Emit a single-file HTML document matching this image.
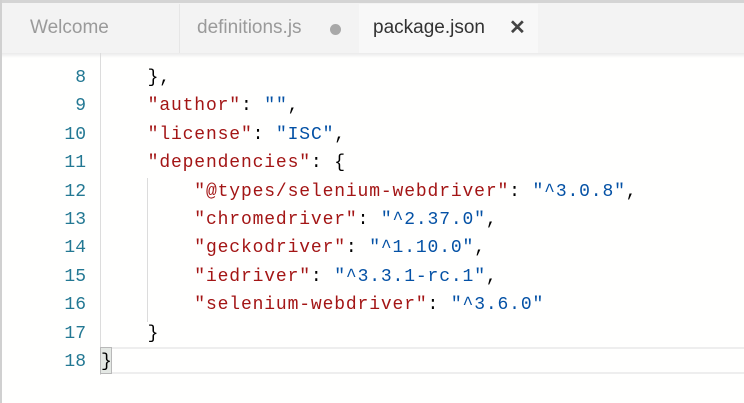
<!DOCTYPE html>
<html><head><style>
body{margin:0;width:744px;height:403px;overflow:hidden;background:#fffffe;position:relative;font-family:"Liberation Sans",sans-serif}
.top{position:absolute;left:0;top:0;width:744px;height:3px;background:#d4d4d4}
.lb{position:absolute;left:0;top:0;width:2px;height:403px;background:#d0d0d0}
.bar{position:absolute;left:2px;top:3px;width:742px;height:50px;background:#f3f3f3}
.tab{position:absolute;top:4px;height:50px;line-height:48px;font-size:19px;color:#9a9a9a}
.shadow{position:absolute;left:2px;top:53px;width:742px;height:5px;background:linear-gradient(#eaeaea,#fffffe)}
.ln{position:absolute;left:0;width:86px;text-align:right;color:#237893;font-family:"Liberation Mono",monospace;font-size:18px}
.code{position:absolute;left:101px;font-family:"Liberation Mono",monospace;font-size:18px;letter-spacing:0.86px;white-space:pre;color:#000}
.k{color:#a31515}.s{color:#0451a5}
</style></head><body>
<div class="bar"></div>
<div class="top"></div>
<div class="tab" style="left:2px;width:177px;border-right:1px solid #e6e6e6;"><span style="position:absolute;left:28px">Welcome</span></div>
<div class="tab" style="left:180px;width:179px;"><span style="position:absolute;left:17px">definitions.js</span><span style="position:absolute;left:150px;top:20px;width:11px;height:11px;border-radius:50%;background:#a8a8a8"></span></div>
<div class="tab" style="left:359px;width:179px;background:#f8f8f8;color:#333"><span style="position:absolute;left:14px">package.json</span><span style="position:absolute;left:150px;font-weight:bold;font-size:20px;color:#444">✕</span></div>
<div class="shadow"></div>
<div style="position:absolute;left:100px;top:53px;width:1px;height:322px;background:#dcdcdc"></div>
<div style="position:absolute;left:147px;top:178px;width:1px;height:144px;background:#dcdcdc"></div>
<div style="position:absolute;left:100px;top:347px;width:644px;height:2px;background:#eeeeee"></div>
<div style="position:absolute;left:100px;top:372px;width:644px;height:2px;background:#eeeeee"></div>
<div style="position:absolute;left:100px;top:347px;width:10px;height:25px;border:1px solid #b9b9b9;background:#e4e8e4"></div>
<div class="lb"></div>
<div id="g"></div>
<script>
var lines=[
'    },',
'    <span class="k">"author"</span>: <span class="s">""</span>,',
'    <span class="k">"license"</span>: <span class="s">"ISC"</span>,',
'    <span class="k">"dependencies"</span>: {',
'        <span class="k">"@types/selenium-webdriver"</span>: <span class="s">"^3.0.8"</span>,',
'        <span class="k">"chromedriver"</span>: <span class="s">"^2.37.0"</span>,',
'        <span class="k">"geckodriver"</span>: <span class="s">"^1.10.0"</span>,',
'        <span class="k">"iedriver"</span>: <span class="s">"^3.3.1-rc.1"</span>,',
'        <span class="k">"selenium-webdriver"</span>: <span class="s">"^3.6.0"</span>',
'    }',
'}'];
var h='';
for(var i=0;i<lines.length;i++){var y=68+i*28.4;
h+='<div class="ln" style="top:'+y+'px">'+(8+i)+'</div><div class="code" style="top:'+y+'px">'+lines[i]+'</div>';}
document.getElementById('g').innerHTML=h;
</script>
</body></html>
